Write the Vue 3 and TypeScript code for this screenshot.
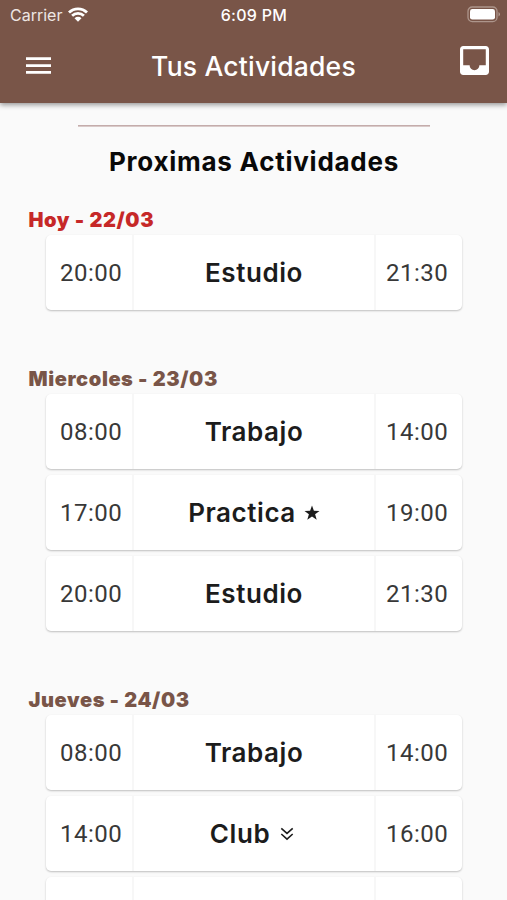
<script setup lang="ts">
interface Activity {
  start: string
  name: string
  end: string
  icon?: 'star' | 'chevrons'
}

interface Day {
  label: string
  today?: boolean
  items: Activity[]
}

const days: Day[] = [
  {
    label: 'Hoy - 22/03',
    today: true,
    items: [{ start: '20:00', name: 'Estudio', end: '21:30' }],
  },
  {
    label: 'Miercoles - 23/03',
    items: [
      { start: '08:00', name: 'Trabajo', end: '14:00' },
      { start: '17:00', name: 'Practica', end: '19:00', icon: 'star' },
      { start: '20:00', name: 'Estudio', end: '21:30' },
    ],
  },
  {
    label: 'Jueves - 24/03',
    items: [
      { start: '08:00', name: 'Trabajo', end: '14:00' },
      { start: '14:00', name: 'Club', end: '16:00', icon: 'chevrons' },
      { start: '', name: '', end: '' },
    ],
  },
]
</script>

<template>
  <div class="screen">
    <header class="header">
      <div class="status">
        <div class="carrier">
          <span>Carrier</span>
          <svg class="wifi" viewBox="0 0 20 15" width="20" height="15">
            <path d="M1 5.6 C6 0.6 14 0.6 19 5.6" />
            <path d="M4.1 8.7 C7.4 5.5 12.6 5.5 15.9 8.7" />
            <path class="dot" d="M6.5 11.2 C8.5 9.4 11.5 9.4 13.5 11.2 L10 14.7 Z" />
          </svg>
        </div>
        <div class="clock">6:09 PM</div>
        <svg class="battery" viewBox="0 0 34 17" width="34" height="17">
          <rect class="shell" x="1" y="1" width="29" height="14.6" rx="4.2" />
          <rect x="3" y="3" width="25" height="10.6" rx="2.4" fill="#fff" />
          <path d="M31.5 6 Q33 6.8 33 8.3 Q33 9.8 31.5 10.6 Z" fill="#b39c92" />
        </svg>
      </div>
      <div class="toolbar">
        <svg class="menu" viewBox="0 0 25 17" width="25" height="17">
          <path d="M0 0.3h25v2.7H0zM0 7.2h25v2.7H0zM0 14h25v2.7H0z" fill="#fff" />
        </svg>
        <h1 class="title">Tus Actividades</h1>
        <svg class="inbox" viewBox="3 3 18 18" width="29" height="29">
          <path
            fill="#fff"
            d="M19 3H4.99c-1.11 0-1.98.89-1.98 2L3 19c0 1.1.88 2 1.99 2H19c1.1 0 2-.9 2-2V5c0-1.11-.9-2-2-2zm0 12h-4c0 1.66-1.35 3-3 3s-3-1.34-3-3H4.99V5H19v10z"
          />
        </svg>
      </div>
    </header>

    <main class="content">
      <div class="rule"></div>
      <h2 class="section-title">Proximas Actividades</h2>

      <section v-for="day in days" :key="day.label" class="day">
        <h3 class="day-label" :class="{ today: day.today }">{{ day.label }}</h3>
        <div class="cards">
          <article v-for="(item, i) in day.items" :key="i" class="card">
            <div class="time start">{{ item.start }}</div>
            <div class="name">
              <span>{{ item.name }}</span>
              <svg v-if="item.icon === 'star'" class="mark" viewBox="0 0 16 16" width="16" height="16">
                <path
                  fill="#1c1c1c"
                  d="M8 0.6 L9.9 5.7 L15.5 5.9 L11.1 9.3 L12.7 14.7 L8 11.6 L3.3 14.7 L4.9 9.3 L0.5 5.9 L6.1 5.7 Z"
                />
              </svg>
              <svg
                v-if="item.icon === 'chevrons'"
                class="mark chevrons"
                viewBox="0 0 16 16"
                width="16"
                height="16"
              >
                <path class="stroke" d="M2.3 2.3 L8 7.4 L13.7 2.3 M2.3 8 L8 13.1 L13.7 8" />
              </svg>
            </div>
            <div class="time end">{{ item.end }}</div>
          </article>
        </div>
      </section>
    </main>
  </div>
</template>

<style>
body {
  margin: 0;
  background: #fafafa;
}
</style>

<style scoped>
.screen {
  width: 507px;
  height: 900px;
  overflow: hidden;
  display: flex;
  flex-direction: column;
  background: #fafafa;
  font-family: Inter, 'Liberation Sans', sans-serif;
}

.header {
  flex: none;
  height: 103px;
  box-sizing: border-box;
  background: #795548;
  color: #fff;
  box-shadow: 0 2px 5px rgba(0, 0, 0, 0.4);
}

.status {
  display: grid;
  grid-template-columns: 1fr auto 1fr;
  align-items: center;
  height: 29px;
  padding: 0 6px 0 10px;
  font-size: 16px;
}

.carrier {
  display: flex;
  align-items: center;
  gap: 6px;
  color: #eee6e3;
}

.wifi path {
  fill: none;
  stroke: #fff;
  stroke-width: 2.8;
}

.wifi .dot {
  fill: #fff;
  stroke: none;
}

.clock {
  margin-right: 3px;
  font-weight: 500;
  letter-spacing: 0.3px;
}

.battery {
  justify-self: end;
}

.shell {
  fill: none;
  stroke: #ad958b;
  stroke-width: 1.3;
}

.toolbar {
  display: grid;
  grid-template-columns: 72px 1fr 72px;
  align-items: center;
  height: 73px;
}

.menu {
  margin-left: 26px;
}

.title {
  margin: 0;
  text-align: center;
  font-size: 26.5px;
  font-weight: 500;
  letter-spacing: 0.2px;
}

.inbox {
  justify-self: end;
  margin: 0 18px 10px 0;
}

.content {
  padding: 22px 45px 0 46px;
}

.rule {
  height: 1px;
  margin: 0 32px;
  border-bottom: 1px solid #d9cac9;
  background: #c4acab;
}

.section-title {
  margin: 17px 0 0;
  height: 36px;
  line-height: 36px;
  text-align: center;
  font-size: 26px;
  font-weight: 700;
  letter-spacing: 0.75px;
  color: #090909;
}

.day {
  margin-bottom: 55px;
}

.section-title + .day {
  margin-top: 27px;
}

.day-label {
  margin: 0 0 0 -17.5px;
  height: 28px;
  line-height: 27px;
  font-size: 20px;
  font-weight: 900;
  letter-spacing: 0.6px;
  color: #795548;
}

.today {
  color: #c62828;
}

.cards {
  display: flex;
  flex-direction: column;
  gap: 6px;
}

.day + .day .day-label {
  height: 29px;
  line-height: 29px;
}

.card {
  display: grid;
  grid-template-columns: 88px 1fr 88px;
  height: 75px;
  border-radius: 5px;
  background: #fff;
  box-shadow: 0 1px 2px rgba(0, 0, 0, 0.24);
}

.time,
.name {
  display: flex;
  align-items: center;
  justify-content: center;
}

.time {
  justify-content: flex-start;
  box-sizing: border-box;
  font-family: Roboto, Inter, sans-serif;
  font-size: 24px;
  letter-spacing: 0.5px;
  color: #383838;
}

.start {
  padding-left: 14px;
  border-right: 2px solid #f7f7f7;
}

.end {
  padding-left: 10px;
  border-left: 2px solid #f7f7f7;
}

.name {
  gap: 8px;
  font-size: 26px;
  font-weight: 600;
  letter-spacing: 0.55px;
  color: #1c1c1c;
}

.mark {
  flex: none;
}

.chevrons {
  margin: 0 3px 0 1px;
}

.stroke {
  fill: none;
  stroke: #1c1c1c;
  stroke-width: 1.6;
}
</style>
